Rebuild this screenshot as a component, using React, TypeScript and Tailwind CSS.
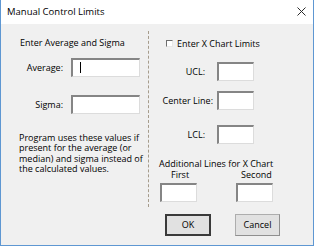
import React from "react";

const font = { fontFamily: '"Open Sans", "Noto Sans", sans-serif' };

function Field({ w, caret }: { w: string; caret?: boolean }) {
  return (
    <div
      className={`${w} h-[19px] bg-white border-t-2 border-l-2 border-r border-b border-t-[#858585] border-l-[#858585] border-r-[#dcdcdc] border-b-[#dcdcdc] relative`}
    >
      {caret ? <div className="absolute left-[7px] top-[2px] w-px h-[11px] bg-black" /> : null}
    </div>
  );
}

export default function App() {
  const para = [
    "Program uses these values if",
    "present for the average (or",
    "median) and sigma instead of",
    "the calculated values.",
  ];
  return (
    <div className="w-[315px] h-[247px] bg-white text-[9px] text-black" style={font}>
      <div className="w-[314px] h-[246px] border-l border-r border-b border-[#5e97d2] bg-[#f0f0f0] flex flex-col">
        <div className="h-[24px] bg-white flex items-center justify-between pl-[6px] pr-[7px]">
          <span className="leading-[12px] text-[9.5px]">Manual Control Limits</span>
          <svg width="9" height="9" viewBox="0 0 9 9" className="mt-[-1px]">
            <path d="M0.5 0.5 L8.5 8.5 M8.5 0.5 L0.5 8.5" stroke="#2b2b2b" strokeWidth="1" />
          </svg>
        </div>
        <div className="flex flex-1">
          <div className="w-[147px] flex flex-col">
            <div className="mt-[13px] pl-[19px] leading-[12px]">Enter Average and Sigma</div>
            <div className="mt-[9px] flex items-center">
              <div className="w-[62px] text-right leading-[12px]">Average:</div>
              <div className="ml-[8px]">
                <Field w="w-[69px]" caret />
              </div>
            </div>
            <div className="mt-[18px] flex items-center">
              <div className="w-[62px] text-right leading-[12px]">Sigma:</div>
              <div className="ml-[8px]">
                <Field w="w-[69px]" />
              </div>
            </div>
            <div className="mt-[19px] pl-[18px] flex flex-col">
              {para.map((l) => (
                <div key={l} className="h-[10.4px] leading-[10.4px] whitespace-nowrap">
                  {l}
                </div>
              ))}
            </div>
          </div>
          <div className="mt-[7px] h-[176px] border-l border-dashed border-[#a69c8c]" />
          <div className="flex-1 flex flex-col">
            <div className="mt-[14px] pl-[17px] flex items-center leading-[12px]">
              <div className="w-[7px] h-[7px] border-t border-l border-[#6e6e6e] border-r border-b border-r-[#e8e8e8] border-b-[#e8e8e8] bg-white mt-[-1px]" />
              <span className="ml-[4px]">Enter X Chart Limits</span>
            </div>
            <div className="mt-[12px] flex items-center">
              <div className="w-[56px] text-right leading-[12px]">UCL:</div>
              <div className="ml-[12px]">
                <Field w="w-[37px]" />
              </div>
            </div>
            <div className="mt-[10px] flex items-center">
              <div className="w-[64px] text-right leading-[12px]">Center Line:</div>
              <div className="ml-[4px]">
                <Field w="w-[37px]" />
              </div>
            </div>
            <div className="mt-[15px] flex items-center">
              <div className="w-[56px] text-right leading-[12px]">LCL:</div>
              <div className="ml-[12px]">
                <Field w="w-[37px]" />
              </div>
            </div>
            <div className="mt-[14px] pl-[10px] h-[11px] leading-[11px]">Additional Lines for X Chart</div>
            <div className="flex h-[11px] leading-[11px]">
              <span className="ml-[22px]">First</span>
              <span className="ml-[52px]">Second</span>
            </div>
            <div className="mt-[3px] flex">
              <div className="ml-[11px]">
                <Field w="w-[37px]" />
              </div>
              <div className="ml-[39px]">
                <Field w="w-[37px]" />
              </div>
            </div>
            <div className="mt-[12px] flex">
              <div className="ml-[16px] w-[46px] h-[22px] border-2 border-[#3a3a3a] bg-[#e1e1e1] flex items-center justify-center leading-[12px]">
                OK
              </div>
              <div className="ml-[24px] w-[45px] h-[22px] border border-[#adadad] border-r-[#8f8f8f] border-b-[#8f8f8f] bg-[#e1e1e1] flex items-center justify-center leading-[12px]">
                Cancel
              </div>
            </div>
          </div>
        </div>
      </div>
    </div>
  );
}
